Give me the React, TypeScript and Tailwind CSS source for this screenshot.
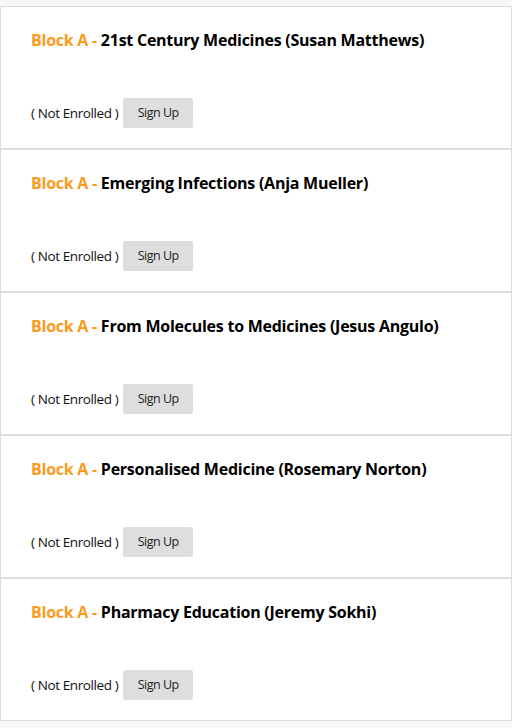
import React from "react";

const courses = [
  "21st Century Medicines (Susan Matthews)",
  "Emerging Infections (Anja Mueller)",
  "From Molecules to Medicines (Jesus Angulo)",
  "Personalised Medicine (Rosemary Norton)",
  "Pharmacy Education (Jeremy Sokhi)",
];

export default function App() {
  return (
    <div
      className="min-h-[728px] w-[512px] bg-[#f7f7f7] pt-[6px]"
      style={{ fontFamily: '"Open Sans", sans-serif' }}
    >
      {courses.map((c) => (
        <div
          key={c}
          className="h-[143px] border border-[#dcdcdc] bg-white pl-[30px] pt-[20px] flex flex-col"
        >
          <div className="text-[16px] leading-[26px] font-bold tracking-[-0.25px] text-black">
            <span className="text-[#fb9a1b]">Block A - </span>
            {c}
          </div>
          <div className="mt-[45px] flex items-center h-[30px]">
            <span className="text-[13.5px] tracking-[-0.4px] text-[#111]">( Not Enrolled )</span>
            <button className="ml-[5px] h-[30px] w-[70px] bg-[#dedede] rounded-[2px] text-[12.5px] tracking-[-0.5px] text-[#222]">
              Sign Up
            </button>
          </div>
        </div>
      ))}
    </div>
  );
}
